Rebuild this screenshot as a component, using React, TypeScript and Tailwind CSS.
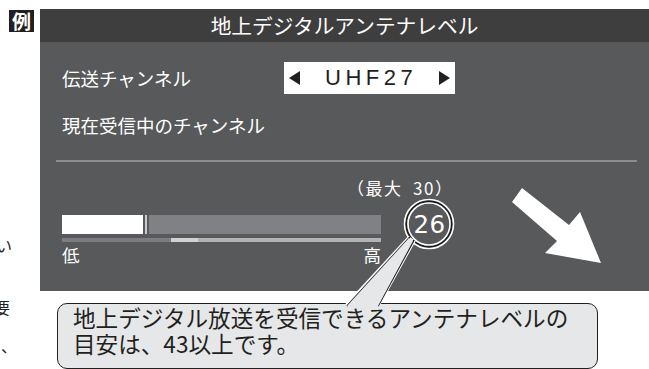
const jp = '[font-family:"Noto_Sans_CJK_JP","Noto_Sans",sans-serif]';

const LevelCircle = () => (
  <svg width="52" height="52" viewBox="0 0 52 52" className="shrink-0">
    <circle cx="26" cy="26" r="24.5" fill="none" stroke="#ffffff" strokeWidth="1.6" />
    <circle cx="26" cy="26" r="22.7" fill="none" stroke="#1a1a1a" strokeWidth="1.4" />
    <circle cx="26" cy="26" r="21" fill="none" stroke="#ffffff" strokeWidth="1.6" />
    <text
      x="26.5"
      y="34.5"
      textAnchor="middle"
      fill="#ffffff"
      fontSize="24.5"
      letterSpacing="0.5"
      fontFamily='"DejaVu Sans", sans-serif'
    >
      26
    </text>
  </svg>
);

const App = () => {
  return (
    <div className={`relative w-[649px] h-[369px] bg-white flex overflow-hidden text-[#231f20] ${jp}`}>
      {/* left margin of the manual page */}
      <div className="w-[40px] shrink-0 overflow-hidden flex flex-col text-[16px] leading-[16px]">
        <div className="mt-[10px] ml-[9px] w-[25px] h-[22px] bg-[#231f20] text-white font-bold text-[19px] leading-[22px] text-center">
          例
        </div>
        <div className="mt-[205px] -ml-[4px] whitespace-nowrap">い</div>
        <div className="mt-[46px] -ml-[6px] whitespace-nowrap">要</div>
        <div className="mt-[22px] ml-[1px] whitespace-nowrap">、</div>
      </div>

      <div className="flex-1 flex flex-col pt-[9px]">
        {/* TV screen */}
        <div className="h-[283px] flex flex-col">
          <div className="h-[33px] bg-[#3e3e3e] flex items-center justify-center text-white text-[20.7px] leading-none">
            地上デジタルアンテナレベル
          </div>
          <div className="relative flex-1 bg-[#58595b] pl-[22px] flex flex-col text-white">
            <div className="mt-[20px] h-[32px] flex items-center">
              <span className="w-[222px] text-[18.5px] leading-none">伝送チャンネル</span>
              <div className="w-[171px] h-[32px] bg-white flex items-center text-[#231f20]">
                <svg width="12" height="16" viewBox="0 0 12 16" className="ml-[5px]">
                  <path d="M11 1v14L0 8z" fill="#231f20" />
                </svg>
                <span className="ml-[24px] text-[22px] leading-none tracking-[4.5px] [font-family:'Liberation_Sans',sans-serif]">
                  UHF27
                </span>
                <svg width="11" height="16" viewBox="0 0 11 16" className="ml-[22px]">
                  <path d="M0 1v14L11 8z" fill="#231f20" />
                </svg>
              </div>
            </div>

            <div className="mt-[19px] h-[24px] flex items-center text-[18.5px] leading-none">
              現在受信中のチャンネル
            </div>

            <div className="mt-[23px] -ml-[6px] w-[581px] h-[2px] bg-[#8c8c8c]" />

            <div className="mt-[16px] ml-[285px] text-[17px] leading-[20px] tracking-[1.5px] whitespace-nowrap">
              （最大&nbsp;&nbsp;30）
            </div>

            <div className="flex items-start">
              <div className="w-[319px] pt-[17px] flex flex-col">
                <div className="h-[19px] flex">
                  <div className="w-[81px] bg-white" />
                  <div className="w-[2px] ml-[2px] bg-[#c9c9c9]" />
                  <div className="flex-1 ml-[2px] bg-[#808184]" />
                </div>
                <div className="mt-[4px] h-[4px] flex">
                  <div className="w-[109px] bg-[#7c7d80]" />
                  <div className="w-[27px] bg-[#d2d2d2]" />
                  <div className="flex-1 bg-[#b3b3b3]" />
                </div>
                <div className="mt-[3px] flex justify-between text-[17.5px] leading-[20px]">
                  <span>低</span>
                  <span>高</span>
                </div>
              </div>
              <div className="ml-[22px]">
                <LevelCircle />
              </div>
            </div>

            {/* arrow pointing down-right */}
            <svg
              className="absolute left-[470px] top-[145px]"
              width="92"
              height="78"
              viewBox="470 145 92 78"
            >
              <path
                d="M482 146L529 183L540 170L561 221L505 211L517 199L472 160Z"
                fill="#ffffff"
              />
            </svg>
          </div>
        </div>

        {/* callout */}
        <div className="mt-[12px] ml-[17px] w-[541px] h-[66px] rounded-[10px] border-[1.5px] border-[#231f20] bg-[#e6e7e8] pl-[15px] pt-[1px] text-[22.6px] leading-[26px] whitespace-nowrap">
          地上デジタル放送を受信できるアンテナレベルの
          <br />
          目安は、43以上です。
        </div>
      </div>

      {/* callout pointer */}
      <svg className="absolute left-0 top-0 pointer-events-none" width="649" height="369">
        <path d="M410 237L414 240L378 306L347 306Z" fill="#e6e7e8" />
        <path d="M410 237L347 305M414 240L378 305" stroke="#ffffff" strokeWidth="4" fill="none" />
        <path d="M410 237L347 306M414 240L378 306" stroke="#231f20" strokeWidth="1.6" fill="none" />
        <path d="M409 238L413 241L378 306L347 306Z" fill="#e6e7e8" />
      </svg>
    </div>
  );
};

export default App;
